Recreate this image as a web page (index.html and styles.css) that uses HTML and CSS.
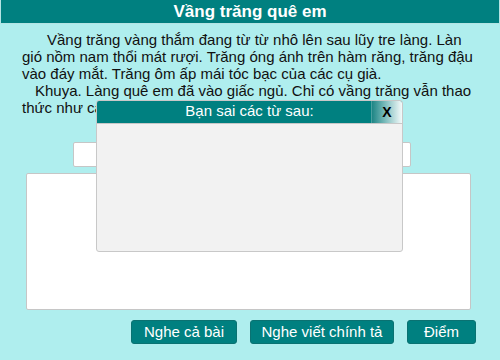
FILE: index.html
```html
<!DOCTYPE html>
<html lang="vi">
<head>
<meta charset="utf-8">
<link rel="stylesheet" href="styles.css">
</head>
<body>
<div class="page">
  <h1 class="title">Vầng trăng quê em</h1>
  <div class="passage">
    <p class="p1">Vầng trăng vàng thắm đang từ từ nhô lên sau lũy tre làng. Làn gió nồm nam thổi mát rượi. Trăng óng ánh trên hàm răng, trăng đậu vào đáy mắt. Trăng ôm ấp mái tóc bạc của các cụ già.</p>
    <p class="p2">Khuya. Làng quê em đã vào giấc ngủ. Chỉ có vầng trăng vẫn thao thức như canh gác trong đêm.</p>
  </div>
  <div class="answer-line"></div>
  <div class="answer-area"></div>
  <div class="actions">
    <button class="btn btn-all">Nghe cả bài</button>
    <button class="btn btn-dict">Nghe viết chính tả</button>
    <button class="btn btn-score">Điểm</button>
  </div>

  <div class="dialog">
    <div class="dialog-head">Bạn sai các từ sau:</div>
    <button class="dialog-close">X</button>
    <div class="dialog-body"></div>
  </div>
</div>
</body>
</html>
```
FILE: styles.css
```css
html, body {
  margin: 0;
  padding: 0;
  background: #afeeee;
}
.page {
  position: relative;
  width: 500px;
  height: 360px;
  font-family: "Liberation Sans", Arial, sans-serif;
  overflow: hidden;
}
.title {
  margin: 0;
  height: 23px;
  background: #008080;
  border: 1px solid #b4e4e4;
  border-top: 0;
  color: #fff;
  font-size: 17px;
  font-weight: bold;
  line-height: 23px;
  text-align: center;
}
.passage {
  padding: 7px 24px 0 22px;
  font-size: 15px;
  line-height: 17px;
  color: #111;
}
.passage p {
  margin: 0;
}
.p1 { text-indent: 25px; }
.p2 { text-indent: 13px; }
.answer-line {
  margin: 26px 0 0 73px;
  width: 336px;
  height: 23px;
  background: #fff;
  border: 1px solid #c6c6c6;
  border-radius: 2px;
}
.answer-area {
  margin: 6px 0 0 26px;
  width: 443px;
  height: 135px;
  background: #fff;
  border: 1px solid #c6c6c6;
  border-radius: 2px;
}
.actions {
  display: flex;
  justify-content: flex-end;
  gap: 13px;
  margin-top: 10px;
  padding-right: 24px;
}
.btn {
  box-sizing: border-box;
  height: 24px;
  padding: 0;
  border: 1px solid #0a7272;
  border-radius: 3px;
  background: #008080;
  color: #fff;
  font-family: "Liberation Sans", Arial, sans-serif;
  font-size: 15px;
  line-height: 20px;
  white-space: nowrap;
}
.btn-all { width: 106px; }
.btn-dict { width: 144px; }
.btn-score { width: 69px; }
.dialog {
  position: absolute;
  left: 96px;
  top: 100px;
  width: 305px;
  height: 150px;
  background: #f2f2f2;
  border: 1px solid #c8c8c8;
  border-radius: 3px;
  overflow: hidden;
}
.dialog-head {
  height: 22px;
  background: #008080;
  border-bottom: 1px solid #c8c8c8;
  color: #fff;
  font-size: 15px;
  line-height: 20px;
  text-align: center;
}
.dialog-close {
  position: absolute;
  top: 0;
  right: 0;
  width: 31px;
  height: 22px;
  padding: 0;
  border: 0;
  border-left: 1px solid #4aa0a0;
  background: linear-gradient(to right, #1d8585, #7ebdbd 45%, #f4fafa);
  color: #000;
  font-family: "Liberation Sans", Arial, sans-serif;
  font-weight: bold;
  font-size: 14px;
  line-height: 22px;
}
.dialog-body {
  height: 127px;
}
```
